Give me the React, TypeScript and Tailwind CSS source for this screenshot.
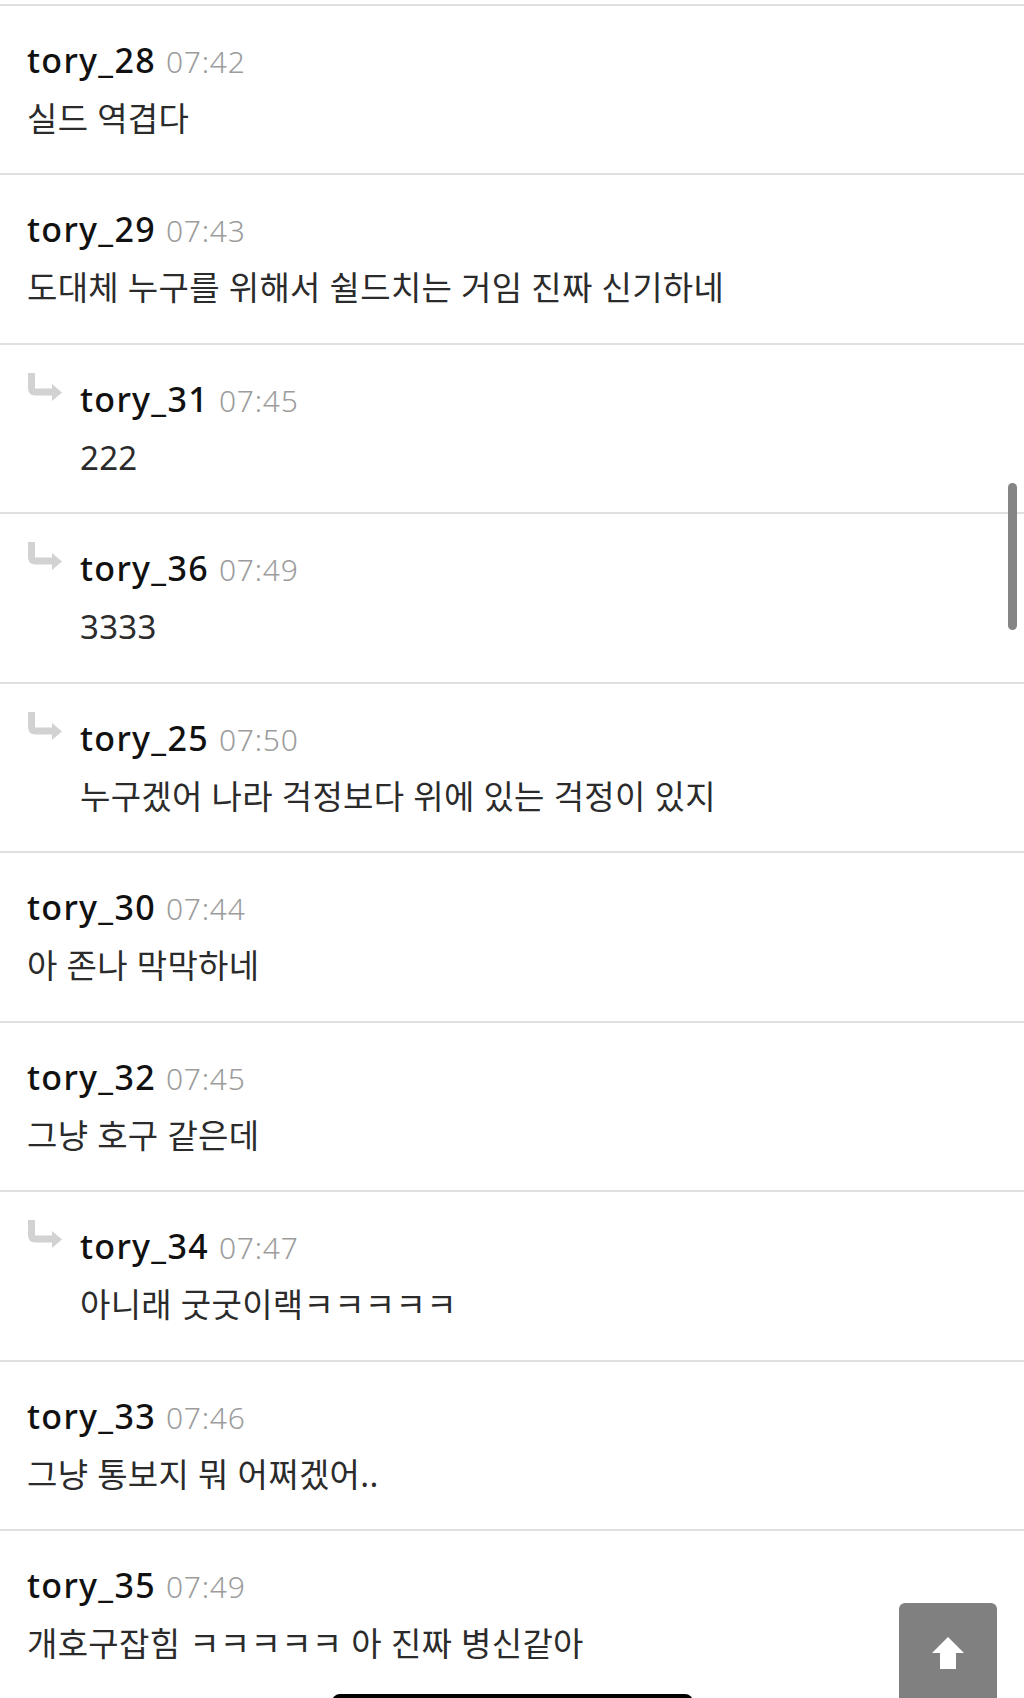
import React from "react";

type Item = { name: string; time: string; text: string; reply?: boolean };

const items: Item[] = [
  { name: "tory_28", time: "07:42", text: "실드 역겹다" },
  { name: "tory_29", time: "07:43", text: "도대체 누구를 위해서 쉴드치는 거임 진짜 신기하네" },
  { name: "tory_31", time: "07:45", text: "222", reply: true },
  { name: "tory_36", time: "07:49", text: "3333", reply: true },
  { name: "tory_25", time: "07:50", text: "누구겠어 나라 걱정보다 위에 있는 걱정이 있지", reply: true },
  { name: "tory_30", time: "07:44", text: "아 존나 막막하네" },
  { name: "tory_32", time: "07:45", text: "그냥 호구 같은데" },
  { name: "tory_34", time: "07:47", text: "아니래 굿굿이랙ㅋㅋㅋㅋㅋ", reply: true },
  { name: "tory_33", time: "07:46", text: "그냥 통보지 뭐 어쩌겠어.." },
  { name: "tory_35", time: "07:49", text: "개호구잡힘 ㅋㅋㅋㅋㅋ 아 진짜 병신같아" },
];

function ReplyArrow() {
  return (
    <svg width="34" height="30" viewBox="0 0 34 30" className="shrink-0">
      <path d="M3.5 0 V15 Q3.5 19 7.5 19 H25" fill="none" stroke="#d2d2d2" strokeWidth="7" />
      <polygon points="24,11 34,19.5 24,28" fill="#d2d2d2" />
    </svg>
  );
}

function Row({ item }: { item: Item }) {
  return (
    <div
      className={
        item.reply
          ? "flex h-[169.44px] items-start gap-[18px] border-t-2 border-[#e0e0e0] pl-[28px] pt-[28px]"
          : "flex h-[169.44px] items-start border-t-2 border-[#e0e0e0] pl-[27px] pt-[28px]"
      }
    >
      {item.reply && <ReplyArrow />}
      <div className="mt-[6px] flex flex-col gap-[19px]">
        <div className="h-[40px] leading-[40px] whitespace-nowrap">
          <span className="text-[34px] font-medium tracking-[1.3px] text-[#111111]">{item.name}</span>
          <span className="ml-[10px] text-[30px] font-light tracking-[0.8px] text-[#9c9c9c]">{item.time}</span>
        </div>
        <div className="h-[40px] leading-[40px] text-[33px] tracking-[0.3px] text-[#2b2b2b] whitespace-nowrap">
          {item.text}
        </div>
      </div>
    </div>
  );
}

export default function App() {
  return (
    <div
      className="relative h-[1698px] w-[1024px] overflow-hidden bg-white pt-[4px]"
      style={{ fontFamily: '"Noto Sans", "Noto Sans CJK KR", sans-serif' }}
    >
      <div className="flex flex-col">
        {items.map((it, i) => (
          <Row key={i} item={it} />
        ))}
      </div>

      {/* scrollbar */}
      <div className="absolute left-[1008px] top-[483px] h-[147px] w-[9px] rounded-full bg-[#858585]" />

      {/* scroll to top button */}
      <div className="absolute left-[899px] top-[1603px] flex h-[110px] w-[98px] justify-center rounded-[6px] bg-[#808080] pt-[34px]">
        <svg width="32" height="32" viewBox="0 0 32 32">
          <polygon points="16,0 32,16 24,16 24,32 8,32 8,16 0,16" fill="#ffffff" />
        </svg>
      </div>

      {/* home indicator */}
      <div className="absolute left-[332px] top-[1694px] h-[12px] w-[361px] rounded-t-[8px] bg-black" />
    </div>
  );
}
